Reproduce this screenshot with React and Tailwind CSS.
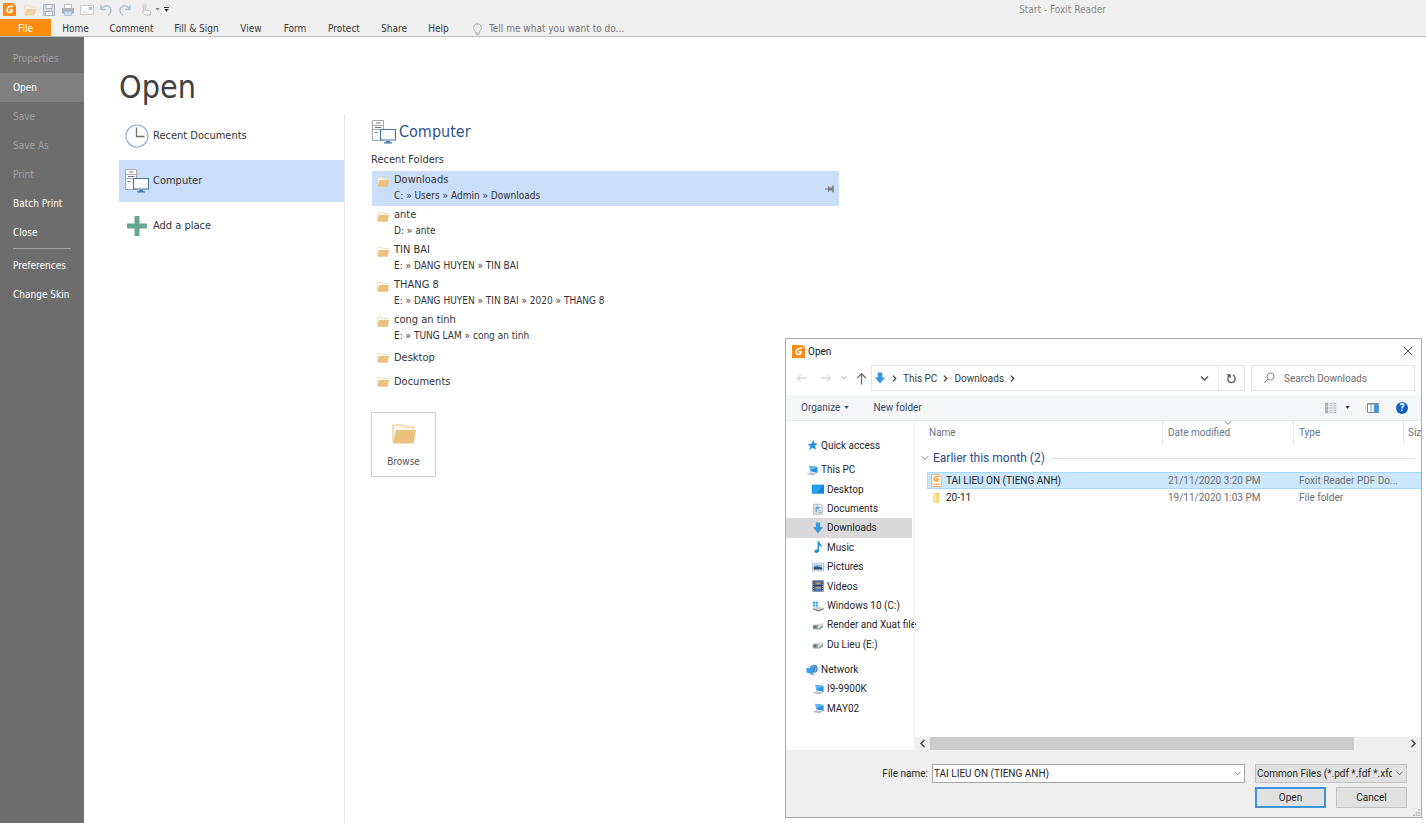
import React from "react";

const stroke = { fill: "none", strokeLinecap: "round", strokeLinejoin: "round" };

function FoxitLogo({ className }) {
  return (
    <svg viewBox="0 0 14 14" className={className} aria-hidden="true">
      <path d="M0 0h11.500L14 2.500V14H0z" fill="#fa8c16" />
      <path d="M11.500 0L14 2.500h-2.500z" fill="#ffd2a0" />
      <path
        d="M10 3.600C7 3.400 4.300 4.700 4.300 7.300c0 1.900 1.300 3 2.800 3 1.800 0 2.700-1.300 2.700-3H7.500"
        {...stroke}
        stroke="#fff"
        strokeWidth="1.600"
      />
    </svg>
  );
}

function Folder({ className }) {
  return (
    <svg viewBox="0 0 24 20" className={className} aria-hidden="true">
      <path d="M1 18.500V1h9.500l1.500 2h9.500v4" fill="#fffaf0" stroke="#f3d6a4" strokeWidth="1.500" />
      <path d="M4 6h20L21.500 19.500H1z" fill="#ecc07f" />
    </svg>
  );
}

function ComputerIcon({ className }) {
  return (
    <svg viewBox="0 0 24 24" className={className} aria-hidden="true">
      <path d="M.5.5h11v20H.5z" fill="#fff" stroke="#a8a8a8" />
      <path d="M.5 5.500h11M.5 9.500h11" stroke="#a8a8a8" />
      <path d="M4 3h4.500M3 7.500h6.500M2.500 12.500h3" stroke="#777" />
      <path d="M8.500 9.500h15v10.500h-15z" fill="#fff" stroke="#3f77ad" strokeWidth="1.200" />
      <path d="M14 21h4v1.200h2v1.300h-8v-1.300h2z" fill="#3f77ad" />
    </svg>
  );
}

function ClockIcon() {
  return (
    <svg viewBox="0 0 24 24" className="size-6" aria-hidden="true">
      <circle cx="12" cy="12" r="11" fill="#fff" stroke="#8fb2d6" strokeWidth="1.200" />
      <path d="M11.500 3.500v9h8" fill="none" stroke="#6e6e6e" strokeWidth="1.300" />
    </svg>
  );
}

function PlusIcon() {
  return (
    <svg viewBox="0 0 24 24" className="size-6" aria-hidden="true">
      <path d="M9.500 2h5v7.500H22v5h-7.500V22h-5v-7.500H2v-5h7.500z" fill="#68a691" />
    </svg>
  );
}

function Chevron({ className, dir = "right", width = 1.5 }) {
  const d = {
    right: "M3.500 2l3.500 3.500L3.500 9",
    left: "M7.500 2L4 5.500 7.500 9",
    down: "M2 3.500l3.500 3.500L9 3.500",
  }[dir];
  return (
    <svg viewBox="0 0 11 11" className={className} aria-hidden="true">
      <path d={d} fill="none" stroke="currentColor" strokeWidth={width} />
    </svg>
  );
}

function Caret({ className }) {
  return (
    <svg viewBox="0 0 6 4" className={className} aria-hidden="true">
      <path d="M0 0h6L3 3.500z" fill="currentColor" />
    </svg>
  );
}

function DownArrow({ className }) {
  return (
    <svg viewBox="0 0 12 12" className={className} aria-hidden="true">
      <path d="M3.700.5h4.600v5h3L6 11.500.7 5.500h3z" fill="#3a97e2" />
    </svg>
  );
}

const quickTools = [
  {
    label: "Open file",
    art: (
      <g>
        <path d="M1.500 11.500v-9H6l1 1.500h5v2" fill="none" stroke="#f3dfc2" />
        <path d="M3.500 6h10l-2 6.500H1.500z" fill="#f1d2a8" />
      </g>
    ),
  },
  {
    label: "Save",
    art: (
      <g fill="none" stroke="#b0b0c4">
        <path d="M1.500 1.500h11v11h-11z" fill="#dcdce8" />
        <path d="M4 1.500h6v4H4zM3.500 8.500h7v4h-7z" fill="#f8f8fb" />
      </g>
    ),
  },
  {
    label: "Print",
    art: (
      <g>
        <path d="M3.500 1.500h7v4h-7z" fill="#fff" stroke="#b8bcc0" />
        <path d="M1 5h12v5.500H1z" fill="#a9b1b9" />
        <path d="M3.500 8.500h7v4h-7z" fill="#c4dcf0" stroke="#b2c4d4" />
      </g>
    ),
  },
  {
    label: "Email",
    art: (
      <g>
        <path d="M.5 2.500h13v9H.5z" fill="#fafafa" stroke="#cccccc" />
        <path d="M8.500 4h3.500v3H8.500z" fill="#b4cce0" />
        <path d="M2.500 9h5" stroke="#d4d4d4" />
      </g>
    ),
  },
  {
    label: "Undo",
    art: <path d="M2 2.500v4h4M2.300 6.300C4 3 7.500 2 10 3.500c3 2 2.600 6-.5 8.500" {...stroke} stroke="#a9c2d8" strokeWidth="1.400" />,
  },
  {
    label: "Redo",
    art: <path d="M12 2.500v4H8M11.700 6.300C10 3 6.500 2 4 3.500c-3 2-2.600 6 .5 8.500" {...stroke} stroke="#a9c2d8" strokeWidth="1.400" />,
  },
];

const tabs = [
  ["Home", "w-[49px]"],
  ["Comment", "w-[63px]"],
  ["Fill & Sign", "w-[67px]"],
  ["View", "w-[42px]"],
  ["Form", "w-[46px]"],
  ["Protect", "w-[52px]"],
  ["Share", "w-[48px]"],
  ["Help", "w-[41px]"],
];

function Header() {
  return (
    <header className="border-b border-[#bdbdbd] bg-[#efefef]">
      <div className="flex h-[19px] items-center pl-[3px]">
        <FoxitLogo className="size-[13px]" />
        <div className="ml-[7px] flex items-center gap-[5px]">
          {quickTools.map((t) => (
            <button key={t.label} aria-label={t.label}>
              <svg viewBox="0 0 14 14" className="size-[14px]">{t.art}</svg>
            </button>
          ))}
          <button aria-label="Touch mode" className="ml-[3px] flex items-center gap-[2px] text-[#8a8a8a]">
            <svg viewBox="0 0 14 14" className="size-[13px]">
              <circle cx="4.800" cy="3" r="2.300" {...stroke} stroke="#c8d4de" />
              <path d="M4 9V3.500c0-1.200 1.500-1.200 1.500 0V7.500l5 1c1 .3 1 1 .9 2l-.5 2.500H5.500L2.300 9.800c-.5-.8.500-1.500 1.700-.4" fill="#f4f4f4" stroke="#bcbcbc" />
            </svg>
            <Caret className="h-[3px] w-[5px]" />
          </button>
          <button aria-label="Customize toolbar" className="-ml-[1px] flex flex-col items-center gap-px text-[#333]">
            <span className="h-px w-[5px] bg-[#333]" />
            <Caret className="h-[3px] w-[5px]" />
          </button>
        </div>
        <h1 className="ml-auto mr-[320px] text-[10px] text-[#8b8b8b]">Start - Foxit Reader</h1>
      </div>
      <nav className="flex h-[17px] items-stretch text-[10px] leading-[14px] text-[#3a3a3a]">
        <button className="w-[51px] bg-[#fa8d10] pt-[3px] text-white">File</button>
        {tabs.map(([name, w]) => (
          <button key={name} className={`${w} pt-[3px] text-center whitespace-nowrap`}>{name}</button>
        ))}
        <label className="ml-[14px] flex items-center gap-[7px] pt-[3px]">
          <svg viewBox="0 0 10 14" className="h-[13px] w-[9px]" role="img" aria-label="Tell me">
            <path d="M3 10.500C3 8.500.7 7.500.7 4.800.7 2.500 2.600.7 5 .7s4.300 1.800 4.300 4.100C9.300 7.500 7 8.500 7 10.500zM3.500 12.500h3" {...stroke} stroke="#a5a5a5" />
          </svg>
          <input className="w-[160px] bg-transparent outline-none placeholder:text-[#757575]" placeholder="Tell me what you want to do..." />
        </label>
      </nav>
    </header>
  );
}

function MenuItem({ children, disabled, active }) {
  return (
    <button
      disabled={disabled}
      className={`h-[29px] w-full pl-[13px] text-left ${active ? "bg-[#808080]" : ""} ${disabled ? "text-[#a0a0a0]" : "text-white"}`}
    >
      {children}
    </button>
  );
}

function Sidebar() {
  return (
    <nav className="w-[84px] shrink-0 bg-[#6d6d6d] pt-[7px] text-[10px]">
      <MenuItem disabled>Properties</MenuItem>
      <MenuItem active>Open</MenuItem>
      <MenuItem disabled>Save</MenuItem>
      <MenuItem disabled>Save As</MenuItem>
      <MenuItem disabled>Print</MenuItem>
      <MenuItem>Batch Print</MenuItem>
      <MenuItem>Close</MenuItem>
      <hr className="mx-[13px] mt-px mb-[2px] border-[#a4a4a4]" />
      <MenuItem>Preferences</MenuItem>
      <MenuItem>Change Skin</MenuItem>
    </nav>
  );
}

function Place({ icon, children, active }) {
  return (
    <button className={`flex h-[42px] w-full items-center gap-[4px] pl-[6px] ${active ? "bg-[#cbdef9]" : ""}`}>
      {icon}
      {children}
    </button>
  );
}

const folders = [
  ["Downloads", "C: » Users » Admin » Downloads"],
  ["ante", "D: » ante"],
  ["TIN BAI", "E: » DANG HUYEN » TIN BAI"],
  ["THANG 8", "E: » DANG HUYEN » TIN BAI » 2020 » THANG 8"],
  ["cong an tinh", "E: » TUNG LAM » cong an tinh"],
];

function RecentFolders() {
  return (
    <section className="box-content w-[468px] pt-[6px] pl-[26px]">
      <h3 className="flex h-[24px] items-center gap-[3px] pl-px text-[16px] text-[#31548b]">
        <ComputerIcon className="size-6" />
        Computer
      </h3>
      <h4 className="mt-[7px] h-[20px] leading-[18px]">Recent Folders</h4>
      <ul className="ml-px">
        {folders.map(([name, path], i) => (
          <li key={name} className={`flex h-[35px] pl-[5px] ${i === 0 ? "bg-[#cbdef9]" : ""}`}>
            <Folder className="mt-[6px] h-[10px] w-[12px]" />
            <a href="#" className="ml-[5px] flex-1 pt-px">
              <span className="block leading-[16px]">{name}</span>
              <span className="block text-[10px] leading-[16px]">{path}</span>
            </a>
            {i === 0 && (
              <button aria-label="Pin folder" className="mr-[4px]">
                <svg viewBox="0 0 10 8" className="h-[8px] w-[10px]">
                  <path d="M0 3.500h3V1.200h1.200V2.500h3V.8h1.600v6.400H7.200V5.500h-3v1.300H3V4.500H0z" fill="#7a7a7a" />
                </svg>
              </button>
            )}
          </li>
        ))}
        {["Desktop", "Documents"].map((name) => (
          <li key={name} className="flex h-[24px] items-center pl-[5px]">
            <Folder className="h-[10px] w-[12px]" />
            <a href="#" className="ml-[5px]">{name}</a>
          </li>
        ))}
      </ul>
      <button className="mt-[18px] flex h-[65px] w-[65px] flex-col items-center justify-between border border-[#cfcfcf] pt-[11px] pb-[7px] text-[10px] leading-[14px] text-[#555]">
        <Folder className="h-[20px] w-[24px]" />
        Browse
      </button>
    </section>
  );
}

const monitor = (
  <g>
    <path d="M.5 11.500L5 9.500l8 1.500-5 2.500z" fill="#b9c1c8" />
    <path d="M4 2l9.500 1.500v7L5 8.500z" fill="#2f93dd" />
    <path d="M4 2l9.500 1.500L4.800 7.500z" fill="#62b8f2" />
  </g>
);
const drive = (
  <g>
    <path d="M1 6.500l12-1.500v4.500L8 13l-7-1z" fill="#d9dadb" />
    <path d="M1 7h6v5H1z" fill="#9aa0a5" />
    <path d="M2 8.500h3v2H2z" fill="#3f6f67" />
    <path d="M13 7v2.500L8 12.500V11z" fill="#8f9498" />
  </g>
);
const art = {
  star: <path d="M8.500 1l1.300 4 4 .2-3.200 2.700.9 4.600-3.800-2.300L3.800 13l1.200-4.500L1.500 6l4.700-.5z" fill="#2a93dc" />,
  down: <path d="M4.500.5h5v5.500H13L7 13 1 6h3.500z" fill="#3a97e2" />,
  monitor,
  desktop: (
    <g>
      <path d="M0 2h14v10.500H0z" fill="#0f87e0" />
      <path d="M.8 2.800h12.400L6 11.700H.8z" fill="#27a3f6" />
    </g>
  ),
  document: (
    <g>
      <path d="M2 1.500h8l2 2v9.500H2z" fill="#eef1f4" stroke="#a2a8ae" />
      <path d="M4 4h5v3H6v4H4z" fill="#6da9d8" />
      <path d="M7.500 9h3M7.500 11h3" stroke="#999" />
    </g>
  ),
  music: <path d="M6.500 0h1.800c.2 3.500 4 4 3 8.500-.4-2.300-1.700-3-3-3.300V11.500c0 3-5.600 3.300-5.600.6 0-1.800 2.300-2.600 3.800-2z" fill="#1f8fe3" />,
  pictures: (
    <g>
      <path d="M.5 2.500h13v9H.5z" fill="#f4f6f8" stroke="#b0b5ba" />
      <path d="M2 4h10v6H2z" fill="#8fc4ea" />
      <path d="M2 7l4-1 6 2v2H2z" fill="#2e5878" />
    </g>
  ),
  videos: (
    <g>
      <path d="M.5.5h13v13H.5z" fill="#4a4a50" />
      <path d="M3 1h8v12H3z" fill="#3c78c8" />
      <path d="M5 3h5v2H5zM4 8h6v2H4z" fill="#d99a45" />
      <path d="M3 6.700h8" stroke="#20304a" />
      <path d="M1.700 2v11M12.300 2v11" stroke="#c8c8c8" strokeDasharray="1 1.500" />
    </g>
  ),
  windows: (
    <g>
      <path d="M1 9l6-1.500 6.500 1.500v1.500l-5.500 3-7-3z" fill="#cfd2d4" />
      <path d="M13.500 9.500v1.500L8 13.500 1 11v-1l7 2z" fill="#74797d" />
      <path d="M1 2h2.500v2.500H1zM4.200 2h2.500v2.500H4.200zM1 5.200h2.500v2.500H1zM4.200 5.200h2.500v2.500H4.200z" fill="#1aa3ec" />
    </g>
  ),
  drive,
  network: (
    <g>
      <circle cx="9" cy="5.500" r="4.700" fill="#4c86c6" />
      <path d="M6 2.500c2-1.500 3 .5 2 2M11 4c1 2 .5 4-1 5" stroke="#a9cdea" fill="none" />
      <path d="M.5 4.500l7.500 1v6.500L.5 10z" fill="#35a4ee" />
      <path d="M3 11l5 2 2-1.200-3-1z" fill="#8d98a2" />
    </g>
  ),
};

const Art = ({ name }) => (
  <svg viewBox="0 0 14 14" className="size-[12px] shrink-0" aria-hidden="true">{art[name]}</svg>
);

function TreeItem({ icon, children, level = 1, active }) {
  return (
    <li className={`mr-[2px] min-h-0 flex-1 ${active ? "bg-[#d9d9d9]" : ""}`}>
      <a
        href="#"
        className={`flex h-full items-center gap-[3px] whitespace-nowrap ${level === 1 ? "pl-[20px]" : "pl-[26px]"}`}
      >
        <Art name={icon} />
        {children}
      </a>
    </li>
  );
}

function Tree() {
  return (
    <nav className="w-[128px] shrink-0 pt-[14px] text-[#1f1f1f]">
      <ul className="flex h-[20px] flex-col">
        <TreeItem icon="star">Quick access</TreeItem>
      </ul>
      <ul className="mt-[5px] flex h-[194px] flex-col">
        <TreeItem icon="monitor">This PC</TreeItem>
        <TreeItem level={2} icon="desktop">Desktop</TreeItem>
        <TreeItem level={2} icon="document">Documents</TreeItem>
        <TreeItem level={2} icon="down" active>Downloads</TreeItem>
        <TreeItem level={2} icon="music">Music</TreeItem>
        <TreeItem level={2} icon="pictures">Pictures</TreeItem>
        <TreeItem level={2} icon="videos">Videos</TreeItem>
        <TreeItem level={2} icon="windows">Windows 10 (C:)</TreeItem>
        <TreeItem level={2} icon="drive">Render and Xuat file</TreeItem>
        <TreeItem level={2} icon="drive">Du Lieu (E:)</TreeItem>
      </ul>
      <ul className="mt-[6px] flex h-[58px] flex-col">
        <TreeItem icon="network">Network</TreeItem>
        <TreeItem level={2} icon="monitor">I9-9900K</TreeItem>
        <TreeItem level={2} icon="monitor">MAY02</TreeItem>
      </ul>
    </nav>
  );
}

function Files() {
  return (
    <div className="flex min-w-0 flex-1 flex-col overflow-hidden border-l border-[#f0f0f0]">
      <table className="w-[540px] table-fixed border-separate border-spacing-0 text-left">
        <colgroup>
          <col className="w-[12px]" />
          <col className="w-[236px]" />
          <col className="w-[131px]" />
          <col className="w-[110px]" />
          <col />
        </colgroup>
        <thead>
          <tr className="h-[23px] text-[#66748a]">
            <td />
            <th className="border-r border-[#e5e5e5] pl-[2px] font-normal">Name</th>
            <th className="relative border-r border-[#e5e5e5] pl-[5px] font-normal">
              Date modified
              <Chevron dir="down" width={1} className="absolute -top-[3px] left-[60px] size-[10px] text-[#777]" />
            </th>
            <th className="border-r border-[#e5e5e5] pl-[5px] font-normal">Type</th>
            <th className="pl-[4px] font-normal">Size</th>
          </tr>
        </thead>
        <tbody>
          <tr className="h-[28px]">
            <th colSpan={5} className="pr-[40px] pl-[5px] font-normal">
              <span className="flex items-center gap-[3px] text-[12px] text-[#2d4a8a]">
                <Chevron dir="down" width={1} className="size-[10px] text-[#777]" />
                Earlier this month (2)
                <span className="ml-[3px] h-px flex-1 bg-[#e2e2e2]" />
              </span>
            </th>
          </tr>
          <tr className="h-[17px] leading-[15px] text-[#6d6d6d]">
            <td />
            <td className="border-y border-l border-[#a5d6fb] bg-[#cce8ff] pl-[3px] text-[#222]">
              <span className="flex items-center gap-[4px]">
                <svg viewBox="0 0 12 14" className="h-[13px] w-[11px]" aria-hidden="true">
                  <path d="M.5.5h8l3 3v10H.5z" fill="#fff" stroke="#f3a65a" />
                  <path d="M8.500 2.800C5.500 2.500 3.500 3.500 3.500 5.500 3.500 8.500 8 8.200 8 5.500H6" {...stroke} stroke="#f58a1f" strokeWidth="1.300" />
                  <path d="M2.500 11.300h7" stroke="#f3a65a" strokeWidth="2" strokeDasharray="2 .6" />
                </svg>
                TAI LIEU ON (TIENG ANH)
              </span>
            </td>
            <td className="border-y border-[#a5d6fb] bg-[#cce8ff] pl-[5px]">21/11/2020 3:20 PM</td>
            <td className="border-y border-[#a5d6fb] bg-[#cce8ff] pl-[5px] whitespace-nowrap">Foxit Reader PDF Do...</td>
            <td className="border-y border-[#a5d6fb] bg-[#cce8ff]" />
          </tr>
          <tr className="h-[17px] leading-[15px] text-[#6d6d6d]">
            <td />
            <td className="pl-[4px] text-[#222]">
              <span className="flex items-center gap-[4px]">
                <svg viewBox="0 0 11 13" className="h-[12px] w-[11px]" aria-hidden="true">
                  <path d="M2 1h6.500v10.500H2z" fill="#f7d272" />
                  <path d="M2 1l4 1.500V13l-4-1.500z" fill="#fbe39e" />
                </svg>
                20-11
              </span>
            </td>
            <td className="pl-[5px]">19/11/2020 1:03 PM</td>
            <td className="pl-[5px]">File folder</td>
            <td />
          </tr>
        </tbody>
      </table>
      <div className="mt-auto flex h-[13px] items-center bg-[#efefef] text-[#444]">
        <button aria-label="Scroll left" className="flex w-[15px] justify-center">
          <Chevron dir="left" className="size-[11px]" />
        </button>
        <div className="flex-1 self-stretch pr-[52px]">
          <div className="h-full bg-[#cbcbcb]" />
        </div>
        <button aria-label="Scroll right" className="flex w-[15px] justify-center">
          <Chevron className="size-[11px]" />
        </button>
      </div>
    </div>
  );
}

function AddressRow() {
  return (
    <div className="flex h-[26px] items-center pr-[6px] pl-[10px] text-[#3a3a3a]">
      <button aria-label="Back" className="text-[#c6c6c6]">
        <svg viewBox="0 0 12 12" className="size-[12px]"><path d="M11 6H1.500M5 2.500L1.500 6 5 9.500" fill="none" stroke="currentColor" /></svg>
      </button>
      <button aria-label="Forward" className="ml-[12px] text-[#c6c6c6]">
        <svg viewBox="0 0 12 12" className="size-[12px]"><path d="M1 6h9.500M7 2.500L10.500 6 7 9.500" fill="none" stroke="currentColor" /></svg>
      </button>
      <button aria-label="Recent locations" className="ml-[8px] text-[#c0c0c0]">
        <Chevron dir="down" className="size-[8px]" />
      </button>
      <button aria-label="Up" className="ml-[7px] text-[#6a6a6a]">
        <svg viewBox="0 0 12 12" className="size-[13px]"><path d="M6 11.500V1.500M2 5.500l4-4 4 4" fill="none" stroke="currentColor" strokeWidth="1.200" /></svg>
      </button>
      <div className="ml-[3px] flex h-full w-[374px] items-center border border-[#e4e4e4] pl-[2px]">
        <DownArrow className="size-[12px]" />
        <Chevron className="ml-[4px] size-[9px]" />
        <button className="ml-[4px]">This PC</button>
        <Chevron className="ml-[4px] size-[9px]" />
        <button className="ml-[4px]">Downloads</button>
        <Chevron className="ml-[4px] size-[9px]" />
        <button aria-label="Previous locations" className="mr-[8px] ml-auto text-[#555]">
          <Chevron dir="down" className="size-[11px]" />
        </button>
        <button aria-label="Refresh" className="flex h-full w-[26px] items-center justify-center border-l border-[#e4e4e4]">
          <svg viewBox="0 0 12 12" className="size-[11px]">
            <path d="M4.500 5.500V2H1M4 2.500C1 4.500 1.200 10.300 6 10.500c4.800-.2 5.200-6.500 1.500-8.300" fill="none" stroke="#5c5c5c" strokeWidth="1.400" />
          </svg>
        </button>
      </div>
      <label className="ml-[6px] flex h-full min-w-0 flex-1 items-center gap-[9px] border border-[#e4e4e4] pl-[11px]">
        <svg viewBox="0 0 12 12" className="size-[12px] shrink-0" role="img" aria-label="Search">
          <circle cx="7.500" cy="4.500" r="3.500" fill="none" stroke="#8a8a8a" />
          <path d="M5 7L1 11" stroke="#8a8a8a" />
        </svg>
        <input className="w-full min-w-0 bg-transparent outline-none placeholder:text-[#6d6d6d]" placeholder="Search Downloads" />
      </label>
    </div>
  );
}

function OpenDialog() {
  return (
    <section
      role="dialog"
      aria-labelledby="dialog-title"
      className="absolute right-[4px] bottom-[5px] flex h-[480px] w-[637px] flex-col border border-[#ababab] bg-white font-['Roboto','Noto_Sans',sans-serif] text-[10px]"
    >
      <header className="flex h-[26px] items-center pr-[8px] pb-[2px] pl-[6px] text-[#111]">
        <FoxitLogo className="size-[13px]" />
        <h2 id="dialog-title" className="ml-[3px]">Open</h2>
        <button aria-label="Close" className="ml-auto">
          <svg viewBox="0 0 10 10" className="size-[10px]"><path d="M1 1l8 8M9 1L1 9" stroke="#555" /></svg>
        </button>
      </header>
      <AddressRow />
      <div className="mt-[4px] flex h-[26px] items-center border-b border-[#e8eaec] bg-[#f4f6f8] pr-[13px] pl-[15px] text-[#33476b]">
        <button className="flex items-center gap-[4px]">Organize <Caret className="h-[3px] w-[5px]" /></button>
        <button className="ml-[24px]">New folder</button>
        <button aria-label="Change view" className="ml-auto flex items-center gap-[8px] text-[#1e2b44]">
          <svg viewBox="0 0 12 12" className="size-[12px]">
            <path d="M.5 1h2.500v2.500H.5zM.5 4.800h2.500v2.500H.5zM.5 8.500h2.500V11H.5z" fill="#b9b3a8" stroke="#8d8d8d" strokeWidth=".5" />
            <path d="M4.500 1.500h7M4.500 3.700h7M4.500 6h7M4.500 8.300h7M4.500 10.500h7" stroke="#a0a6ac" strokeWidth=".8" strokeDasharray="3 .7" />
          </svg>
          <Caret className="h-[3px] w-[5px]" />
        </button>
        <button aria-label="Preview pane" className="ml-[17px]">
          <svg viewBox="0 0 12 10" className="h-[10px] w-[12px]">
            <path d="M.5.5h11v9H.5z" fill="#fff" stroke="#7f8790" />
            <path d="M7 1h4.500v8.500H7z" fill="#3a97e2" />
            <path d="M4 1v8M.5 1.200h11" stroke="#8f979f" />
          </svg>
        </button>
        <button aria-label="Help" className="ml-[17px] size-[12px] rounded-full bg-[#0b63c4] text-[10px] leading-[12px] font-bold text-white">?</button>
      </div>
      <div className="flex min-h-0 flex-1">
        <Tree />
        <Files />
      </div>
      <footer className="flex h-[67px] flex-col gap-[4px] bg-[#efefef] pt-[14px] pr-[14px] text-[#1f1f1f]">
        <div className="flex h-[19px] items-stretch justify-end">
          <label htmlFor="file-name" className="mr-[4px] leading-[19px]">File name:</label>
          <div className="relative w-[313px]">
            <input id="file-name" defaultValue="TAI LIEU ON (TIENG ANH)" className="h-full w-full border border-[#a4a4a4] bg-white pl-px outline-none" />
            <Chevron dir="down" width={1} className="absolute top-[5px] right-[3px] size-[9px] text-[#555]" />
          </div>
          <div className="relative ml-[10px] w-[152px]">
            <select aria-label="File type" className="h-full w-full appearance-none overflow-hidden border border-[#c2c2c2] bg-[#e1e1e1] pr-[14px] pl-px whitespace-nowrap outline-none">
              <option>Common Files (*.pdf *.fdf *.xfdf *.xdp)</option>
            </select>
            <Chevron dir="down" width={1} className="absolute top-[5px] right-[3px] size-[9px] text-[#555]" />
          </div>
        </div>
        <div className="flex justify-end gap-[10px]">
          <button className="h-[21px] w-[71px] border-2 border-[#3c93dc] bg-[#e1e1e1]">Open</button>
          <button className="h-[21px] w-[71px] border border-[#c2c2c2] bg-[#e1e1e1]">Cancel</button>
        </div>
        <svg viewBox="0 0 8 8" className="absolute right-px bottom-px size-[7px]" aria-hidden="true">
          <path d="M6 0h2v2H6zM3 3h2v2H3zM6 3h2v2H6zM0 6h2v2H0zM3 6h2v2H3zM6 6h2v2H6z" fill="#b8b8b8" />
        </svg>
      </footer>
    </section>
  );
}

export default function App() {
  return (
    <div className="relative flex min-h-screen flex-col bg-white font-['DejaVu_Sans_Condensed','DejaVu_Sans',sans-serif] text-[11px] text-[#333]">
      <Header />
      <main className="flex flex-1">
        <Sidebar />
        <div className="flex flex-1 flex-col pl-[35px]">
          <h2 className="mt-[27px] h-[50px] text-[32px] leading-[46px] text-[#404040]">Open</h2>
          <div className="flex flex-1">
            <div className="flex w-[226px] flex-col gap-[3px] border-r border-[#e6e6e6] pt-px">
              <Place icon={<ClockIcon />}>Recent Documents</Place>
              <Place active icon={<ComputerIcon className="size-6" />}>Computer</Place>
              <Place icon={<PlusIcon />}>Add a place</Place>
            </div>
            <RecentFolders />
          </div>
        </div>
      </main>
      <OpenDialog />
    </div>
  );
}
